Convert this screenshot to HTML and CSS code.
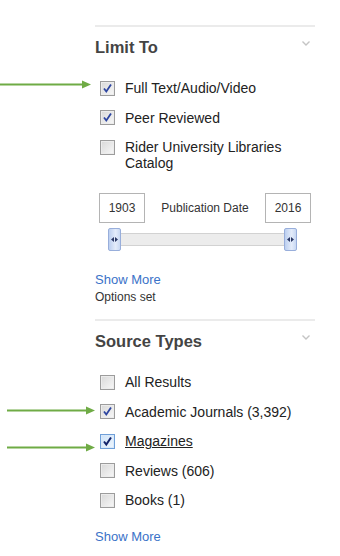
FILE: index.html
```html
<!DOCTYPE html>
<html lang="en">
  <head>
    <meta charset="UTF-8" />
    <meta name="viewport" content="width=device-width, initial-scale=1.0" />
    <title>Refine Results</title>
    <link rel="stylesheet" href="styles.css">
  </head>
  <body>
    <div class="page">
      <!-- annotation arrows -->
      <svg class="arrow arrow-1" width="91" height="9" viewBox="0 0 91 9"><line x1="0" y1="4.5" x2="84" y2="4.5" /><polygon points="82,0.5 91,4.5 82,8.5" /></svg>
      <svg class="arrow arrow-2" width="88" height="9" viewBox="0 0 88 9"><line x1="0" y1="4.5" x2="81" y2="4.5" /><polygon points="79,0.5 88,4.5 79,8.5" /></svg>
      <svg class="arrow arrow-3" width="88" height="9" viewBox="0 0 88 9"><line x1="0" y1="4.5" x2="81" y2="4.5" /><polygon points="79,0.5 88,4.5 79,8.5" /></svg>

      <div class="facets">
        <section class="facet">
          <div class="facet-head">
            <h3>Limit To</h3>
            <svg class="chevron" width="8" height="5" viewBox="0 0 8 5"><path d="M0.5 0.5 L4 4 L7.5 0.5" /></svg>
          </div>
          <ul class="options">
            <li>
              <span class="cb checked"><svg width="13" height="13" viewBox="0 0 13 13"><path d="M3 6.5 L5.3 9.5 L10 2.5" /></svg></span>
              <span class="label">Full Text/Audio/Video</span>
            </li>
            <li>
              <span class="cb checked"><svg width="13" height="13" viewBox="0 0 13 13"><path d="M3 6.5 L5.3 9.5 L10 2.5" /></svg></span>
              <span class="label">Peer Reviewed</span>
            </li>
            <li>
              <span class="cb"></span>
              <span class="label">Rider University Libraries Catalog</span>
            </li>
          </ul>

          <div class="date-range">
            <span class="year">1903</span>
            <span class="date-label">Publication Date</span>
            <span class="year">2016</span>
          </div>
          <div class="slider">
            <span class="handle"><svg width="7" height="5" viewBox="0 0 7 5"><polygon points="0,2.5 3,0 3,5" /><polygon points="7,2.5 4,0 4,5" /></svg></span>
            <span class="track"></span>
            <span class="handle"><svg width="7" height="5" viewBox="0 0 7 5"><polygon points="0,2.5 3,0 3,5" /><polygon points="7,2.5 4,0 4,5" /></svg></span>
          </div>

          <a href="#" class="show-more">Show More</a>
          <div class="note">Options set</div>
        </section>

        <section class="facet">
          <div class="facet-head">
            <h3>Source Types</h3>
            <svg class="chevron" width="8" height="5" viewBox="0 0 8 5"><path d="M0.5 0.5 L4 4 L7.5 0.5" /></svg>
          </div>
          <ul class="options">
            <li>
              <span class="cb"></span>
              <span class="label">All Results</span>
            </li>
            <li>
              <span class="cb checked"><svg width="13" height="13" viewBox="0 0 13 13"><path d="M3 6.5 L5.3 9.5 L10 2.5" /></svg></span>
              <span class="label">Academic Journals (3,392)</span>
            </li>
            <li>
              <span class="cb checked focus"><svg width="13" height="13" viewBox="0 0 13 13"><path d="M3 6.5 L5.3 9.5 L10 2.5" /></svg></span>
              <span class="label hover">Magazines</span>
            </li>
            <li>
              <span class="cb"></span>
              <span class="label">Reviews (606)</span>
            </li>
            <li>
              <span class="cb"></span>
              <span class="label">Books (1)</span>
            </li>
          </ul>
          <a href="#" class="show-more">Show More</a>
        </section>
      </div>
    </div>
  </body>
</html>
```

FILE: styles.css
```css
body {
  font-family: "Liberation Sans", Arial, sans-serif;
  background-color: #fff;
  color: #222;
  margin: 0;
  padding: 0;
}
.page {
  position: relative;
  width: 340px;
  height: 556px;
  overflow: hidden;
}
.arrow {
  position: absolute;
}
.arrow line {
  stroke: #6fab45;
  stroke-width: 2;
}
.arrow polygon {
  fill: #6fab45;
}
.arrow-1 {
  left: 0;
  top: 80px;
}
.arrow-2 {
  left: 7px;
  top: 406px;
}
.arrow-3 {
  left: 7px;
  top: 443px;
}
.facets {
  margin: 25px 0 0 95px;
  width: 220px;
}
.facet {
  border-top: 2px solid #ebebeb;
  padding-top: 10px;
}
.facet + .facet {
  margin-top: 13px;
}
.facet-head {
  display: flex;
  justify-content: space-between;
  align-items: flex-start;
}
.facet-head h3 {
  margin: 0;
  font-size: 16.5px;
  line-height: 20px;
  font-weight: bold;
  color: #444;
}
.chevron {
  margin: 4px 5px 0 0;
}
.chevron path {
  fill: none;
  stroke: #c4c4c4;
  stroke-width: 1.4;
}
.options {
  list-style: none;
  margin: 16px 0 0;
  padding: 0;
}
.options li {
  display: flex;
  align-items: flex-start;
  padding: 7px 0 6.5px 5px;
}
.cb {
  flex: none;
  box-sizing: border-box;
  width: 15px;
  height: 15px;
  margin-top: 0.5px;
  border: 1px solid #9c9c9c;
  background: linear-gradient(135deg, #d8d8d8, #f8f8f8);
  box-shadow: inset 0 0 0 1px #ececec;
  display: flex;
  align-items: center;
  justify-content: center;
}
.cb svg path {
  fill: none;
  stroke: #2d45a0;
  stroke-width: 1.8;
}
.cb.focus {
  border-color: #6f9fd8;
  background: linear-gradient(135deg, #cfe3f8, #eef6fd);
  box-shadow: inset 0 0 0 1px #d9e9fa;
}
.cb.focus svg path {
  stroke: #13236a;
  stroke-width: 2;
}
.label {
  margin-left: 10px;
  font-size: 14px;
  line-height: 16px;
  color: #222;
}
.label.hover {
  text-decoration: underline;
}
.date-range {
  display: flex;
  justify-content: space-between;
  align-items: center;
  margin-top: 15.5px;
  padding: 0 4px;
}
.year {
  box-sizing: border-box;
  width: 46px;
  height: 30px;
  border: 1px solid #b4b4b4;
  font-size: 12px;
  line-height: 28px;
  text-align: center;
  color: #333;
}
.date-label {
  font-size: 12px;
  color: #333;
}
.slider {
  display: flex;
  align-items: center;
  margin: 5px 0 0 13px;
  width: 189px;
}
.handle {
  flex: none;
  box-sizing: border-box;
  width: 13px;
  height: 23px;
  border: 1px solid #98aedb;
  border-radius: 2px;
  background: linear-gradient(to right, #bccff0, #e4ecfa 60%, #c8d8f3);
  display: flex;
  align-items: center;
  justify-content: center;
}
.handle polygon {
  fill: #2b3966;
}
.track {
  flex: 1;
  height: 13px;
  box-sizing: border-box;
  border-top: 1px solid #d2d2d2;
  border-bottom: 1px solid #d2d2d2;
  background-color: #ececec;
}
.show-more {
  display: block;
  margin-top: 21px;
  font-size: 13px;
  line-height: 16px;
  color: #3a72c8;
  text-decoration: none;
}
.facet:last-child .show-more {
  margin-top: 14.5px;
}
.note {
  font-size: 12px;
  line-height: 18px;
  color: #333;
}
```
